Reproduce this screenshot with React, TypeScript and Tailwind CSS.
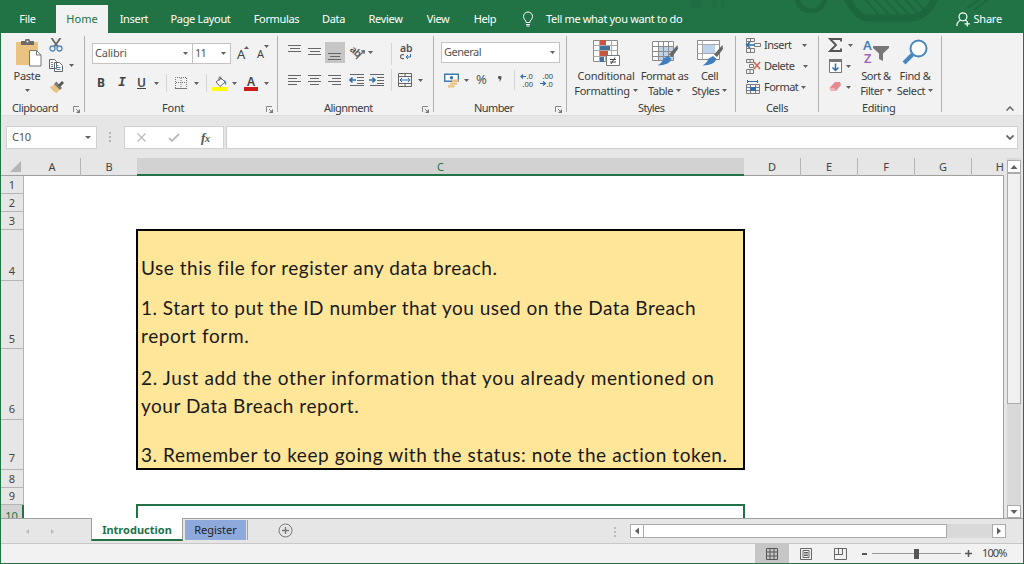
import clsx from "clsx";
import type {ReactNode} from "react";

const Caret = ({className}: {className?: string}) => (
  <svg viewBox="0 0 6 4" className={clsx("h-[3px] w-[5px] shrink-0", className)} preserveAspectRatio="none">
    <path d="M0 0h6L3 4z" fill="#606060" />
  </svg>
);

const ScrollArrow = ({className}: {className?: string}) => (
  <svg width="8" height="8" viewBox="0 0 8 8" className={clsx("shrink-0", className)}>
    <path d="M.5 2h7L4 6z" fill="#606060" />
  </svg>
);

const Lines = ({rows, className}: {rows: number[][]; className?: string}) => (
  <svg width="14" height="12" viewBox="0 0 14 12" className={clsx("shrink-0", className)}>
    {rows.map(([x, y, w]) => (
      <rect key={y} x={x} y={y} width={w} height="1" fill="#666" />
    ))}
  </svg>
);

const Launcher = () => (
  <svg width="7" height="7" viewBox="0 0 7 7" fill="none" stroke="#888">
    <path d="M.5 6V.5H6" />
    <path d="M3 3l2.500 2.500" />
    <path d="M7 3v4H3z" fill="#777" stroke="none" />
  </svg>
);

const Group = ({
  label,
  className,
  labelClass,
  launcher,
  children,
}: {
  label: string;
  className: string;
  labelClass: string;
  launcher?: boolean;
  children: ReactNode;
}) => (
  <section className={clsx("flex shrink-0 flex-col", className)}>
    <div className="h-[68px]">{children}</div>
    <div className="flex h-[14px] items-center">
      <span className={clsx("leading-[14px]", labelClass)}>{label}</span>
      {launcher && (
        <span className="mr-[4px] ml-auto pt-[2px]">
          <Launcher />
        </span>
      )}
    </div>
  </section>
);

const Divider = ({className}: {className?: string}) => (
  <div className={clsx("mt-[3px] h-[76px] w-px shrink-0 bg-[#b0b0b0]", className)} />
);

const tabs = [
  {name: "Insert", className: "w-[52px]"},
  {name: "Page Layout", className: "w-[81px]"},
  {name: "Formulas", className: "w-[71px]"},
  {name: "Data", className: "w-[43px]"},
  {name: "Review", className: "w-[61px]"},
  {name: "View", className: "w-[44px]"},
  {name: "Help", className: "w-[50px]"},
];

const Header = () => (
  <header className="relative flex h-[33px] shrink-0 overflow-hidden bg-[#217346] tracking-[-0.33px] text-white">
    <svg className="absolute top-0 left-[600px]" width="424" height="33" fill="none" stroke="#1d673e">
      <circle cx="211" cy="-3" r="14" strokeWidth="5" />
      <path d="M246-4Q256 18 268 18h44Q328 16 336-4" strokeWidth="7" />
      <path d="M262-4l18 20M272-4l18 20M282-4l18 20M292-4l18 20M302-4l16 18M312-4l12 14" strokeWidth="2" />
      <path d="M390-2l-16 12M381-2l-14 10" strokeWidth="2" />
      <path d="M90 0h12M112 0h5M121 0h3" strokeWidth="15" opacity=".5" />
    </svg>
    <nav className="relative flex pt-[5px] text-center leading-[28px]">
      <span className="w-[55px]">File</span>
      <span className="w-[52px] bg-[#f2f2f2] text-[#217346] ml-px tracking-normal">Home</span>
      {tabs.map((tab) => (
        <span key={tab.name} className={tab.className}>
          {tab.name}
        </span>
      ))}
    </nav>
    <div className="relative ml-[12px] flex items-center pt-[5px]">
      <svg width="12" height="16" viewBox="0 0 12 16" fill="none" stroke="#fff">
        <path d="M4 11.500V10C2.500 8.500 1.500 7.500 1.500 5.500a4.500 4.500 0 0 1 9 0c0 2-1 3-2.500 4.500v1.500zM4 13.500h4M4.500 15h3" />
      </svg>
      <span className="ml-[12px]">Tell me what you want to do</span>
    </div>
    <div className="relative mr-[22px] ml-auto flex items-center pt-[5px]">
      <svg width="15" height="15" viewBox="0 0 14 14" fill="none" stroke="#fff" strokeWidth="1.100">
        <circle cx="6.500" cy="4.500" r="3.700" />
        <path d="M.8 13c0-3 1.500-4.500 3.500-5.300M8.500 7.500l1.500 1M10.500 8.500v5M8 11h5" />
      </svg>
      <span className="ml-[2px] tracking-[-0.2px]">Share</span>
    </div>
  </header>
);

const ClipboardGroup = () => (
  <Group label="Clipboard" className="w-[83px]" labelClass="ml-[11px] tracking-[-0.45px]" launcher>
    <div className="flex">
      <div className="ml-[11px] flex w-[30px] flex-col items-center pt-[6px]">
        <svg width="27" height="28" viewBox="0 0 27 28" className="ml-[4px]">
          <path d="M0 3h22v23H0z" fill="#eac282" />
          <path d="M5 6V2h4a2.500 2.500 0 0 1 5 0h4v4z" fill="#6b6b6b" />
          <circle cx="11.500" cy="2.500" r="1" fill="#f2f2f2" />
          <path d="M13.500 11.500h7l4.500 4.500v11h-11.500z" fill="#fff" stroke="#777" />
          <path d="M20.500 11.500V16H25" fill="none" stroke="#777" />
        </svg>
        <span className="leading-[18px] tracking-[-0.3px]">Paste</span>
        <Caret className="mt-[4px]" />
      </div>
      <div className="ml-[7px] flex flex-col pt-[5px]">
        <svg width="14" height="14" viewBox="0 0 14 14" fill="none">
          <path d="M2.500 0L9 9M11.500 0L5 9" stroke="#666" strokeWidth="1.800" />
          <circle cx="3.500" cy="10.500" r="2.500" stroke="#4e87b8" strokeWidth="1.300" />
          <circle cx="10.500" cy="10.500" r="2.500" stroke="#4e87b8" strokeWidth="1.300" />
        </svg>
        <div className="mt-[7px] flex items-center">
          <svg width="15" height="13" viewBox="0 0 15 13" fill="#fff" stroke="#666">
            <path d="M.5.5h5l2 2v7h-7zM5.500 3.500h5l3 3v6h-8z" />
            <path d="M2 3.500h2M2 5.500h2M2 7.500h2M7.500 6.500h2M7.500 8.500h4M7.500 10.500h4" stroke="#4e87b8" />
          </svg>
          <Caret className="ml-[5px]" />
        </div>
        <svg width="15" height="13" viewBox="0 0 15 13" className="mt-[8px] ml-px">
          <path d="M0 7l5-3 5 5-3 4q-4-1-7-6z" fill="#eac282" />
          <path d="M4 4l2.500-2.500L12 8l-2 2z" fill="#777" />
          <path d="M8 5l4-4 2 2-4 4z" fill="#555" />
        </svg>
      </div>
    </div>
  </Group>
);

const FontGroup = () => (
  <Group label="Font" className="w-[192px]" labelClass="ml-[77px] tracking-[-0.2px]" launcher>
    <div className="flex items-center pt-[9px] pl-[7px]">
      <div className="flex h-[21px] w-[101px] items-center justify-between border border-[#c3c3c3] bg-white pr-[4px] pl-[2px] tracking-[-0.2px] text-[#555]">
        Calibri
        <Caret />
      </div>
      <div className="-ml-px flex h-[21px] w-[39px] items-center justify-between border border-[#c3c3c3] bg-white pr-[4px] pl-[2px] tracking-[-0.8px] text-[#555]">
        11
        <Caret />
      </div>
      <span className="ml-[6px] flex w-[20px] items-start text-[13px] leading-[22px] text-[#444]">
        A<Caret className="mt-[3px] -ml-px rotate-180" />
      </span>
      <span className="flex items-start text-[11px] leading-[22px] text-[#444]">
        <span className="pt-px">A</span>
        <Caret className="mt-[3px]" />
      </span>
    </div>
    <div className="mt-[6px] flex h-[24px] items-center pl-[12px] text-[12px] text-[#444]">
      <b className="w-[20px]">B</b>
      <i className="w-[20px] pl-px font-['Liberation_Mono',monospace] text-[13px] font-bold">I</i>
      <span className="w-[17px] font-semibold underline">U</span>
      <Caret />
      <div className="ml-[7px] h-[18px] w-px bg-[#d5d5d5]" />
      <svg width="12" height="12" viewBox="0 0 12 12" className="ml-[8px]" fill="none" stroke="#777">
        <path d="M.5 11V.5h11V11M6 1v10M1 5.500h10" strokeDasharray="1 1" />
        <path d="M0 11.500h12" />
      </svg>
      <Caret className="ml-[7px]" />
      <div className="ml-[7px] h-[18px] w-px bg-[#d5d5d5]" />
      <svg width="16" height="15" viewBox="0 0 16 15" className="ml-[5px]">
        <path d="M4 6l5-4 4 4-5 4.500z" fill="#fff" stroke="#666" />
        <path d="M7 5V1.500q1-1.500 2 0V4" fill="none" stroke="#666" />
        <path d="M12 4q3 1 2 5-2-1-2-5z" fill="#4e87b8" />
        <path d="M0 11h15v4H0z" fill="#ff0" />
      </svg>
      <Caret className="ml-[4px]" />
      <div className="ml-[7px] flex w-[14px] flex-col items-center text-[12px] leading-[12px] font-semibold">
        A<div className="-mt-px h-[4px] w-[14px] bg-[#d11a1a]" />
      </div>
      <Caret className="ml-[6px]" />
    </div>
  </Group>
);

const Indent = ({flip}: {flip?: boolean}) => (
  <svg width="15" height="12" viewBox="0 0 15 12" fill="none" stroke="#666">
    <path d="M1 .5h14M8 3.500h7M8 6.500h7M8 9.500h7M1 11.500h14" />
    <path
      d={flip ? "M0 6h6M3.500 3.500L6 6 3.500 8.500" : "M1 6h6M3.500 3.500L1 6l2.500 2.500"}
      stroke="#2f6ca8"
      strokeWidth="1.600"
    />
  </svg>
);

const AlignmentGroup = () => (
  <Group label="Alignment" className="w-[155px]" labelClass="ml-[46px] tracking-[-0.55px]" launcher>
    <div className="mt-[8px] flex h-[22px] items-center pl-[10px]">
      <Lines rows={[[0, 1, 13], [2, 4, 10], [0, 7, 13]]} className="-mt-[5px]" />
      <Lines rows={[[0, 2, 13], [2, 5, 10], [0, 8, 13]]} className="ml-[6px]" />
      <div className="ml-[3px] flex h-[21px] w-[20px] items-center justify-center bg-[#c6c6c6]">
        <Lines rows={[[0, 4, 13], [2, 7, 10], [0, 10, 13]]} className="mt-[5px]" />
      </div>
      <svg width="16" height="15" viewBox="0 0 16 15" className="ml-[5px] overflow-visible">
        <text x="0" y="7" fontSize="10" fontWeight="600" fill="#555" letterSpacing="-.3" transform="rotate(42 2 5)">
          ab
        </text>
        <path d="M6 14l8.500-8.500M14.500 5.500L11 6M14.500 5.500L14 9" fill="none" stroke="#666" strokeWidth="1.200" />
      </svg>
      <Caret className="ml-[2px]" />
      <div className="mt-[3px] ml-[18px] h-[22px] w-px bg-[#d5d5d5]" />
      <div className="ml-[8px] flex flex-col text-[10.5px] leading-[9px] font-semibold tracking-[-0.2px] text-[#555]">
        ab
        <svg width="11" height="6" viewBox="0 0 11 6" fill="none" className="mt-px">
          <path d="M4 .7H2.500q-2 0-2 2t2 2H4" stroke="#666" strokeWidth="1.200" />
          <path d="M10.500 0v3H6M8 1L6 3l2 2" stroke="#2f6ca8" />
        </svg>
      </div>
    </div>
    <div className="mt-[5px] flex h-[24px] items-center pl-[10px]">
      <Lines rows={[[0, 1, 13], [0, 4, 9], [0, 7, 13], [0, 10, 9]]} />
      <Lines rows={[[0, 1, 13], [2, 4, 9], [0, 7, 13], [2, 10, 9]]} className="ml-[6px]" />
      <Lines rows={[[0, 1, 13], [4, 4, 9], [0, 7, 13], [4, 10, 9]]} className="mr-[7px] ml-[6px]" />
      <Indent />
      <div className="w-[5px]" />
      <Indent flip />
      <div className="ml-[7px] h-[22px] w-px bg-[#d5d5d5]" />
      <svg width="14" height="14" viewBox="0 0 14 14" className="ml-[6px]" fill="none" stroke="#666">
        <path d="M.5.5h13v13H.5zM.5 3.500h13M.5 10.500h13M7 .5v3M7 10.500v3" />
        <path d="M2 7h10M4 5L2 7l2 2M10 5l2 2-2 2" stroke="#2f6ca8" />
      </svg>
      <Caret className="ml-[6px]" />
    </div>
  </Group>
);

const NumberGroup = () => (
  <Group label="Number" className="w-[132px]" labelClass="ml-[40px] tracking-[-0.6px]" launcher>
    <div className="flex pt-[9px] pl-[7px]">
      <div className="flex h-[21px] w-[119px] items-center justify-between border border-[#c3c3c3] bg-white pr-[4px] pl-[2px] tracking-[-0.5px] text-[#555]">
        General
        <Caret />
      </div>
    </div>
    <div className="mt-[5px] flex h-[24px] items-center pl-[10px] text-[#555]">
      <svg width="15" height="15" viewBox="0 0 15 15">
        <path d="M.7 1.200h13.600v7H.7z" fill="#fff" stroke="#3d78b0" strokeWidth="1.400" />
        <circle cx="7.500" cy="4.700" r="1.800" fill="#3d78b0" />
        <path d="M8 6.500h6.500v2.700H8zM6 9.700h7v2H6zM4 12.200h6.500V14.500H4z" fill="#eac282" />
      </svg>
      <Caret className="ml-[5px]" />
      <span className="ml-[7px] w-[21px] text-[13px]">%</span>
      <svg width="4" height="6" viewBox="0 0 4 6" className="-mt-[3px] ml-px mr-[12px]">
        <path d="M0 1.500a1.700 1.700 0 0 1 3.500 0Q3.500 4.500 1 6q.8-1.500.8-2.800A1.700 1.700 0 0 1 0 1.500z" fill="#555" />
      </svg>
      <div className="h-[20px] w-px bg-[#d5d5d5]" />
      <svg width="14" height="14" viewBox="0 0 14 14" className="ml-[5px] overflow-visible" fontSize="7.500" fill="#444">
        <text x="6.500" y="6">.0</text>
        <text x="2.500" y="13.500">.00</text>
        <path d="M6 3.500H1M3 1.500l-2 2 2 2" stroke="#2f6ca8" strokeWidth="1.200" fill="none" />
      </svg>
      <svg width="14" height="14" viewBox="0 0 14 14" className="ml-[6px] overflow-visible" fontSize="7.500" fill="#444">
        <text x="2.500" y="6">.00</text>
        <text x="6.500" y="13.500">.0</text>
        <path d="M0 10.500h5.500M3 8.500l2.500 2L3 12.500" stroke="#2f6ca8" strokeWidth="1.200" fill="none" />
      </svg>
    </div>
  </Group>
);

const Brush = () => (
  <>
    <path d="M26.500 6l.5 4-6 8-3-2.500z" fill="#666" />
    <path d="M17 17l3.500 3q-2 6-14 6.500 5-3 6-7z" fill="#3f7fbd" />
  </>
);

const BigButton = ({
  icon,
  lines,
  className,
}: {
  icon: ReactNode;
  lines: [string, string];
  className: string;
}) => (
  <div className={clsx("flex shrink-0 flex-col items-center pt-[6px]", className)}>
    <div className="h-[29px]">{icon}</div>
    <span className="leading-[16px] whitespace-nowrap">{lines[0]}</span>
    <span className="flex items-center leading-[13px] whitespace-nowrap">
      {lines[1]}
      <Caret className="ml-[3px]" />
    </span>
  </div>
);

const StylesGroup = () => (
  <Group label="Styles" className="w-[168px]" labelClass="ml-[71px] tracking-[-0.6px]">
    <div className="flex">
      <BigButton
        className="ml-[7px] w-[64px] tracking-[-0.2px]"
        lines={["Conditional", "Formatting"]}
        icon={
          <svg width="28" height="28" viewBox="0 0 28 28">
            <path d="M1.500 1.500h24v21h-24z" fill="#fff" stroke="#888" />
            <path d="M1.500 6.500h24M1.500 11.500h24M1.500 17.500h24M7.500 1.500v21M13.500 1.500v21M19.500 1.500v21" stroke="#aaa" />
            <path d="M8 1h6v5H8zM8 12h8v5H8z" fill="#c8553d" />
            <path d="M8 7h10v4H8zM8 18h4v5H8z" fill="#41719c" />
            <path d="M14.500 16.500h13v10h-13z" fill="#fff" stroke="#777" />
            <path d="M18 20.500h6M18 23h6M23 18.500l-4 6.500" stroke="#444" />
          </svg>
        }
      />
      <BigButton
        className="w-[53px] tracking-[-0.45px]"
        lines={["Format as", "Table"]}
        icon={
          <svg width="28" height="28" viewBox="0 0 28 28">
            <path d="M1.500 2.500h21v19h-21z" fill="#fff" />
            <path d="M7 8h16v14H7z" fill="#bdd3ea" />
            <path d="M1.500 2.500h21v19h-21zM1.500 7.500h21M1.500 12.500h21M1.500 17.500h21M7.500 2.500v19M12.500 2.500v19M17.500 2.500v19" fill="none" stroke="#8a8a8a" />
            <Brush />
          </svg>
        }
      />
      <BigButton
        className="w-[37px] tracking-[-0.4px]"
        lines={["Cell", "Styles"]}
        icon={
          <svg width="28" height="28" viewBox="0 0 28 28">
            <path d="M1.500 1.500h22v19h-22z" fill="#fff" stroke="#8a8a8a" />
            <path d="M1.500 5.500h22M6.500 1.500v19M1.500 14.500h22" stroke="#aaa" />
            <path d="M7 6h12v8H7z" fill="#bdd3ea" />
            <Brush />
          </svg>
        }
      />
    </div>
  </Group>
);

const cellActions = [
  {name: "Insert", caret: "ml-[10px]"},
  {name: "Delete", caret: "ml-[9px]"},
  {name: "Format", caret: "ml-[3px]"},
];

const CellsGroup = () => (
  <Group label="Cells" className="w-[82px]" labelClass="ml-[30px] tracking-[-0.4px]">
    <div className="flex flex-col pt-[2px] pl-[10px] tracking-[-0.5px]">
      {cellActions.map((action) => (
        <div key={action.name} className="flex h-[21px] items-center">
          <svg width="15" height="15" viewBox="0 0 15 15" fill="none" stroke="#7a7a7a">
            {action.name === "Insert" && (
              <>
                <path d="M.5.500h8v3h-8zM4.500.5v3M.5 10.500h8v4h-8zM4.500 10.500v4M.5 3.500v7M8.500 5.500h6v3h-6z" />
                <path d="M1 7h8M4 4L1 7l3 3" stroke="#2f6ca8" strokeWidth="1.600" />
              </>
            )}
            {action.name === "Delete" && (
              <>
                <path d="M.5.500h7v3h-7zM4 .5v3M.5 10.500h7v4h-7zM4 10.500v4M3.500 5.500h4v3h-4z" />
                <path d="M8 3l6 7M14 3l-6 7" stroke="#d9694f" strokeWidth="1.600" />
              </>
            )}
            {action.name === "Format" && (
              <>
                <path d="M.5 4.500h13v9H.5zM.5 7.500h13M.5 10.500h13M4.500 4.500v9M9.500 4.500v9" />
                <path d="M1 1.500h11M1.500 0v3M11.500 0v3" stroke="#2f6ca8" />
                <path d="M4 7h6v4H4z" fill="#2f6ca8" stroke="none" />
              </>
            )}
          </svg>
          <span className="ml-[3px]">{action.name}</span>
          <Caret className={action.caret} />
        </div>
      ))}
    </div>
  </Group>
);

const EditingGroup = () => (
  <Group label="Editing" className="w-[122px]" labelClass="ml-[43px] tracking-[-0.4px]">
    <div className="flex">
      <div className="ml-[9px] flex w-[28px] flex-col pt-[5px]">
        <div className="flex h-[14px] items-center">
          <svg width="15" height="14" viewBox="0 0 15 14" fill="none" stroke="#555" strokeWidth="1.900">
            <path d="M13 3.500V1H2l6 6-6 6h11v-2.500" />
          </svg>
          <Caret className="ml-[5px]" />
        </div>
        <div className="mt-[7px] flex h-[14px] items-center">
          <svg width="15" height="14" viewBox="0 0 15 14" fill="#fff" stroke="#777">
            <path d="M1.500.5h12v13h-12z" />
            <path d="M1 1.500h13" strokeWidth="3" />
            <path d="M7.500 4.500v7M4.500 8.500l3 3 3-3" fill="none" stroke="#2f6ca8" strokeWidth="1.500" />
          </svg>
          <Caret className="ml-[3px]" />
        </div>
        <div className="mt-[7px] flex h-[14px] items-center">
          <svg width="15" height="12" viewBox="0 0 15 12">
            <path d="M7 1h5l1 3-5 6H3L1.500 7z" fill="#e58a94" />
            <path d="M1.500 7L3 10h5L6.500 7z" fill="#efb3ba" />
          </svg>
          <Caret className="ml-[3px]" />
        </div>
      </div>
      <BigButton
        className="ml-[2px] w-[36px] tracking-[-0.45px]"
        lines={["Sort &", "Filter"]}
        icon={
          <svg width="26" height="27" viewBox="0 0 26 27" fill="none" className="overflow-visible">
            <text x="0" y="11" fontSize="13" fontWeight="600" fill="#3f7fbd">A</text>
            <text x="1" y="24" fontSize="13" fontWeight="600" fill="#a364b8">Z</text>
            <path d="M10 7h16v2l-6 5.500V22l-4-2v-5.500L10 9z" fill="#777" />
          </svg>
        }
      />
      <BigButton
        className="ml-[2px] w-[38px] tracking-[-0.35px]"
        lines={["Find &", "Select"]}
        icon={
          <svg width="26" height="26" viewBox="0 0 26 26" fill="none" stroke="#4687c0">
            <circle cx="16.500" cy="9.500" r="8" fill="#fff" strokeWidth="2" />
            <path d="M10.500 15.500L2 24" strokeWidth="4" />
          </svg>
        }
      />
    </div>
  </Group>
);

const Ribbon = () => (
  <div className="flex h-[82px] shrink-0 bg-[#f2f2f2] text-[#3c3c3c]">
    <ClipboardGroup />
    <Divider />
    <FontGroup />
    <Divider />
    <AlignmentGroup />
    <Divider />
    <NumberGroup />
    <Divider />
    <StylesGroup />
    <Divider />
    <CellsGroup />
    <Divider />
    <EditingGroup />
    <Divider />
    <svg width="8" height="5" viewBox="0 0 8 5" className="mt-[73px] mr-[9px] ml-auto" fill="none" stroke="#666" strokeWidth="1.500">
      <path d="M.5 4.500L4 1l3.500 3.500" />
    </svg>
  </div>
);

const FormulaBar = () => (
  <div className="flex h-[43px] shrink-0 items-start border-t border-[#dcdcdc] pt-[10px] pl-[5px]">
    <div className="flex h-[23px] w-[91px] items-center justify-between border border-[#d0d0d0] bg-white pr-[5px] pl-[5px] tracking-[-0.2px] text-[#555]">
      C10
      <Caret className="w-[6px]" />
    </div>
    <div className="mt-[6px] ml-[12px] flex w-[3px] flex-col gap-[2px]">
      <div className="size-[2px] bg-[#b5b5b5]" />
      <div className="size-[2px] bg-[#b5b5b5]" />
      <div className="size-[2px] bg-[#b5b5b5]" />
    </div>
    <div className="ml-[12px] flex h-[23px] w-[100px] items-center border border-[#d0d0d0] bg-white pl-[12px]">
      <svg width="9" height="9" viewBox="0 0 9 9" stroke="#bbb" strokeWidth="1.300">
        <path d="M.5.5l8 8M8.500.5l-8 8" />
      </svg>
      <svg width="12" height="9" viewBox="0 0 12 9" className="ml-[22px]" fill="none" stroke="#bbb" strokeWidth="1.800">
        <path d="M1 5l3 3 7-7" />
      </svg>
      <span className="ml-[21px] font-['Liberation_Serif',serif] text-[13px] font-bold tracking-[-0.3px] text-[#555] italic">
        f<span className="text-[10px]">x</span>
      </span>
    </div>
    <div className="ml-[2px] flex h-[23px] w-[792px] items-center justify-end border border-[#d0d0d0] bg-white pr-[3px]">
      <svg width="8" height="5" viewBox="0 0 8 5" fill="none" stroke="#666" strokeWidth="1.800">
        <path d="M.5.5L4 4 7.500.5" />
      </svg>
    </div>
  </div>
);

const columns = [
  {name: "A", className: "w-[57px] border-r border-[#b5b5b5]"},
  {name: "B", className: "w-[56px]"},
  {name: "C", className: "w-[607px] border-b-2 border-[#217346] bg-[#d2d2d2] text-[#217346]"},
  {name: "D", className: "w-[57px] border-r border-[#b5b5b5]"},
  {name: "E", className: "w-[57px] border-r border-[#b5b5b5]"},
  {name: "F", className: "w-[57px] border-r border-[#b5b5b5]"},
  {name: "G", className: "w-[57px] border-r border-[#b5b5b5]"},
];

const rows = [
  {n: 1, className: "h-[18px]"},
  {n: 2, className: "h-[18px]"},
  {n: 3, className: "h-[18px]"},
  {n: 4, className: "h-[51px] pb-px"},
  {n: 5, className: "h-[68px] pb-px"},
  {n: 6, className: "h-[71px] pb-[2px]"},
  {n: 7, className: "h-[50px] pb-[3px]"},
  {n: 8, className: "h-[18px]"},
  {n: 9, className: "h-[17px]"},
];

const Sheet = () => (
  <div className="flex h-[360px] shrink-0">
    <div className="flex w-[1003px] flex-col">
      <div className="flex h-[18px] shrink-0 border-b border-[#a0a0a0] text-center leading-[17px] text-[#444]">
        <div className="flex w-[23px] items-end justify-end pr-[3px] pb-[3px]">
          <svg width="11" height="11" viewBox="0 0 11 11">
            <path d="M11 0v11H0z" fill="#b5b5b5" />
          </svg>
        </div>
        {columns.map((column) => (
          <div key={column.name} className={clsx("h-[18px] shrink-0", column.className)}>
            {column.name}
          </div>
        ))}
        <div className="ml-auto">H</div>
      </div>
      <div className="flex h-[342px] overflow-hidden">
        <div className="flex w-[23px] shrink-0 flex-col border-r border-[#b5b5b5] text-center text-[#444]">
          {rows.map((row) => (
            <div
              key={row.n}
              className={clsx("flex shrink-0 items-end justify-center border-b border-[#b5b5b5] leading-[17px]", row.className)}
            >
              {row.n}
            </div>
          ))}
          <div className="-mr-px h-[20px] shrink-0 border-r-2 border-[#217346] bg-[#d2d2d2] leading-[21px] text-[#217346]">
            10
          </div>
        </div>
        <div className="flex-1 border-r border-[#a0a0a0] bg-white pt-[53px] pl-[112px] font-['Lato',sans-serif] text-[19px] leading-[28px] text-[#1a1a1a]">
          <div className="flex h-[241px] w-[609px] flex-col border-2 border-black bg-[#ffe699] pl-[3px] whitespace-nowrap">
            <p className="mt-[23px] tracking-[0.52px]">Use this file for register any data breach.</p>
            <p className="mt-[12px] tracking-[0.48px]">
              1. Start to put the ID number that you used on the Data Breach
              <br />
              <span className="tracking-[0.63px]">report form.</span>
            </p>
            <p className="mt-[14px] tracking-[0.67px]">
              2. Just add the other information that you already mentioned on
              <br />
              <span className="tracking-[0.52px]">your Data Breach report.</span>
            </p>
            <p className="mt-[21px] tracking-[0.58px]">
              3. Remember to keep going with the status: note the action token.
            </p>
          </div>
          <div className="mt-[34px] h-[40px] w-[609px] border-2 border-[#217346]" />
        </div>
      </div>
    </div>
    <div className="ml-[3px] flex w-[14px] flex-col bg-[#d9d9d9] pt-[2px]">
      <div className="flex h-[13px] items-center justify-center border border-[#ababab] bg-white">
        <ScrollArrow className="rotate-180" />
      </div>
      <div className="h-[231px] border border-[#ababab] bg-[#f0f0f0]" />
      <div className="mt-auto flex h-[13px] items-center justify-center border border-[#ababab] bg-white">
        <ScrollArrow />
      </div>
    </div>
  </div>
);

const SheetTabs = () => (
  <div className="flex h-[25px] shrink-0 border-t border-[#a0a0a0]">
    <div className="flex w-[90px] items-center gap-[22px] pl-[25px]">
      <svg width="3" height="5" viewBox="0 0 3 5"><path d="M3 0v5L0 2.500z" fill="#bbb" /></svg>
      <svg width="3" height="5" viewBox="0 0 3 5"><path d="M0 0v5l3-2.500z" fill="#bbb" /></svg>
    </div>
    <div className="-mt-px h-[23px] w-[92px] border-r border-b-2 border-l border-[#217346] border-x-[#a0a0a0] bg-white text-center leading-[23px] font-bold text-[#217346]">
      Introduction
    </div>
    <div className="mt-px ml-[2px] h-[20px] w-[61px] bg-[#8ea9db] text-center leading-[20px] text-[#222]">Register</div>
    <div className="mt-px ml-px h-[20px] w-px bg-[#a0a0a0]" />
    <svg width="15" height="15" viewBox="0 0 15 15" className="mt-[4px] ml-[30px]" fill="none" stroke="#777">
      <circle cx="7.500" cy="7.500" r="6.500" />
      <path d="M7.500 4v7M4 7.500h7" strokeWidth="1.300" />
    </svg>
    <div className="mt-[8px] ml-[321px] flex w-[2px] flex-col gap-[2px]">
      <div className="h-[2px] bg-[#bbb]" />
      <div className="h-[2px] bg-[#bbb]" />
      <div className="h-[2px] bg-[#bbb]" />
    </div>
    <div className="mt-[5px] ml-[14px] flex h-[14px] w-[376px] bg-[#d9d9d9]">
      <div className="flex w-[14px] items-center justify-center border border-[#ababab] bg-white">
        <ScrollArrow className="rotate-90" />
      </div>
      <div className="-ml-px w-[304px] border border-[#ababab] bg-white" />
      <div className="ml-auto flex w-[14px] items-center justify-center border border-[#ababab] bg-white">
        <ScrollArrow className="-rotate-90" />
      </div>
    </div>
  </div>
);

const StatusBar = () => (
  <div className="flex h-[20px] shrink-0 items-center border-t border-[#c8c8c8] bg-[#f2f2f2] pl-[754px] text-[#444]">
    <div className="flex h-full w-[34px] items-center justify-center bg-[#c6c6c6]">
      <svg width="12" height="12" viewBox="0 0 12 12" fill="none" stroke="#555">
        <path d="M.5.5h11v11H.5zM.5 4h11M.5 8h11M4 .5v11M8 .5v11" />
      </svg>
    </div>
    <svg width="12" height="12" viewBox="0 0 12 12" className="ml-[11px]" fill="none" stroke="#666">
      <path d="M.5.5h11v11H.5zM3 2.500h6v7H3zM4 4.500h4M4 6h4M4 7.500h4" />
    </svg>
    <svg width="13" height="12" viewBox="0 0 13 12" className="ml-[22px]" fill="none" stroke="#666">
      <path d="M.5.500h12v11H.5zM4.500.5v6M8.500.5v6M.5 6.500h8" />
    </svg>
    <div className="ml-[15px] h-[2px] w-[5px] bg-[#555]" />
    <div className="ml-[5px] flex w-[89px] items-center">
      <div className="h-px w-[42px] bg-[#999]" />
      <div className="h-[10px] w-[5px] bg-[#555]" />
      <div className="h-px w-[42px] bg-[#999]" />
    </div>
    <svg width="7" height="7" viewBox="0 0 7 7" className="ml-[4px]" stroke="#555" strokeWidth="1.500">
      <path d="M3.500 0v7M0 3.500h7" />
    </svg>
    <span className="ml-[10px] -mt-px tracking-[-0.9px]">100%</span>
  </div>
);

export default function App() {
  return (
    <div className="flex h-[564px] w-[1024px] flex-col overflow-hidden bg-[#217346] font-['Noto_Sans',sans-serif] text-[11px] whitespace-nowrap">
      <Header />
      <div className="ml-px flex h-[530px] w-[1022px] flex-col bg-[#e6e6e6]">
        <Ribbon />
        <FormulaBar />
        <Sheet />
        <SheetTabs />
        <StatusBar />
      </div>
    </div>
  );
}
